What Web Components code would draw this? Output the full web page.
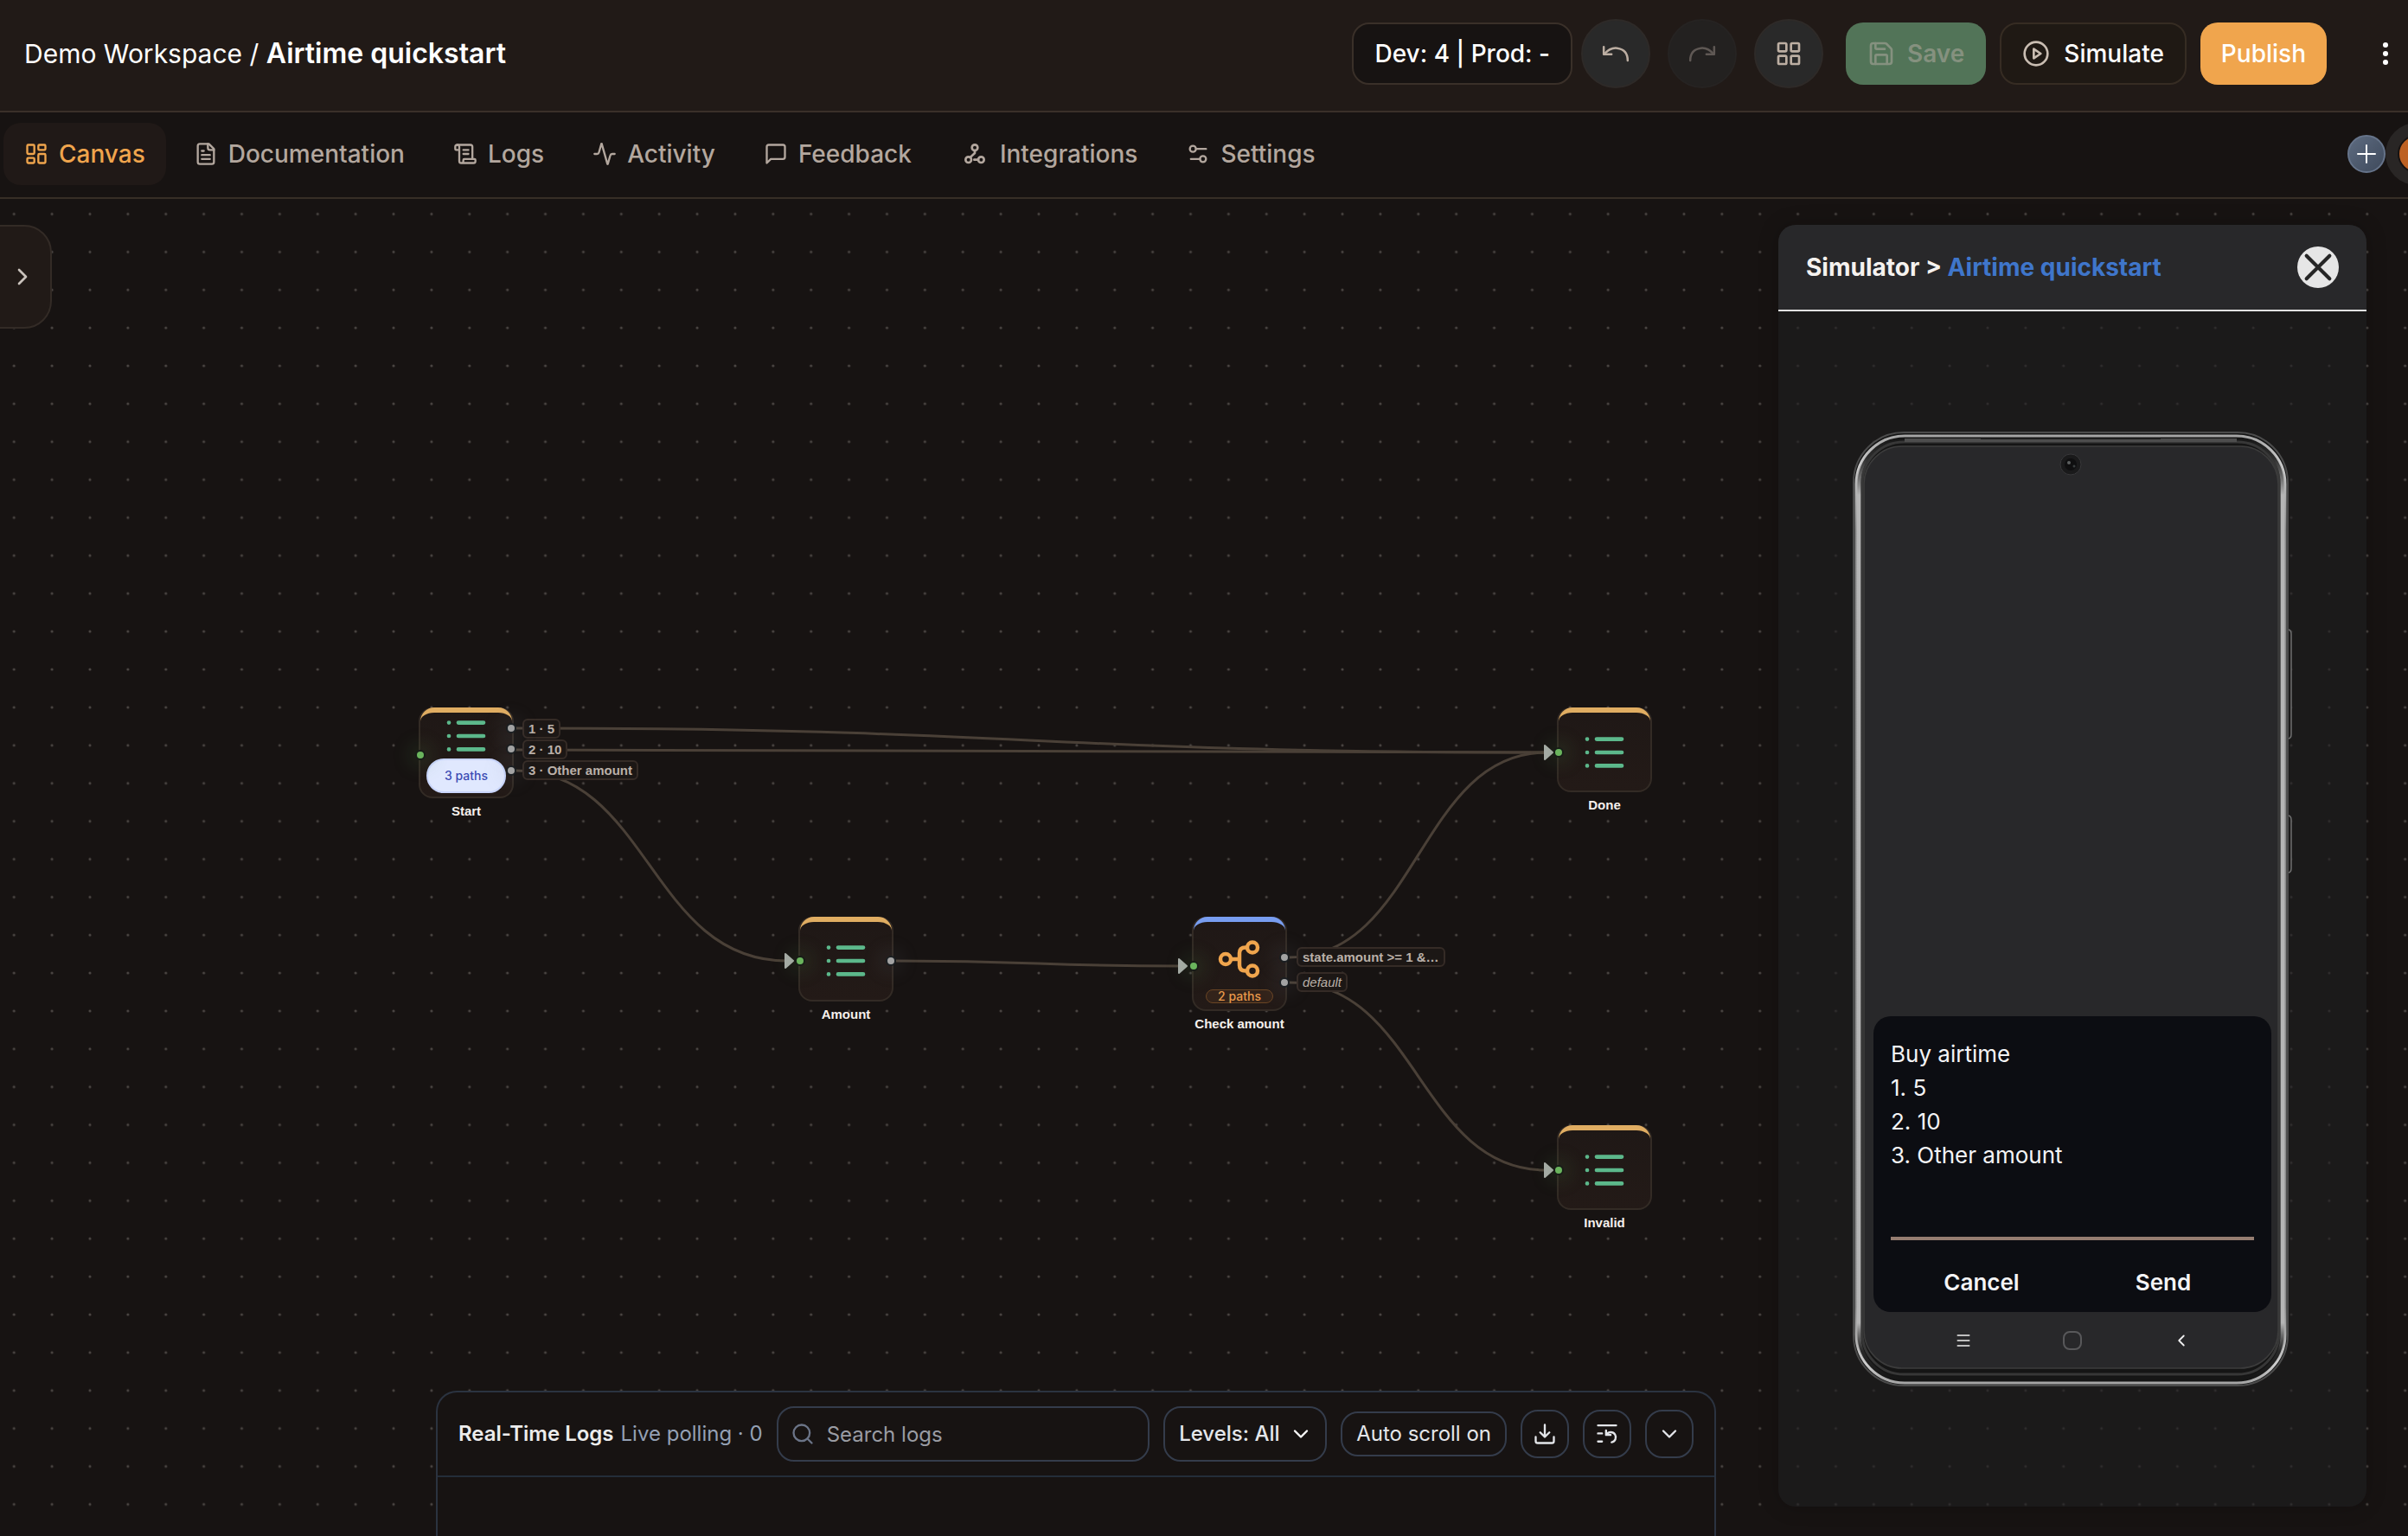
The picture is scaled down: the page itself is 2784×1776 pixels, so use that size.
<!DOCTYPE html>
<html lang="en">
<head>
<meta charset="utf-8">
<title>Airtime quickstart</title>
<style>
  :root {
    --bg: #171312;
    --surface: #211a17;
    --line: #3a3029;
    --muted: #b3a79e;
    --accent: #f0a54d;
    --slate: #343c4b;
  }
  html, body { margin: 0; height: 100%; background: var(--bg); }
  body { font-family: Inter, "Liberation Sans", sans-serif; color: #fff; overflow: hidden; }
</style>
</head>
<body>
<workflow-app></workflow-app>

<script>
const define = (name, css, html, setup) => {
  const template = document.createElement('template');
  template.innerHTML = `<style>*{box-sizing:border-box}${css}</style>${html}`;
  customElements.define(name, class extends HTMLElement {
    connectedCallback() {
      if (this.shadowRoot) return;
      this.attachShadow({ mode: 'open' }).append(template.content.cloneNode(true));
      if (setup) setup(this, this.shadowRoot);
    }
  });
};

const ICONS = {
  dashboard: '<rect x="3" y="3" width="7" height="9" rx="1"/><rect x="14" y="3" width="7" height="5" rx="1"/><rect x="14" y="12" width="7" height="9" rx="1"/><rect x="3" y="16" width="7" height="5" rx="1"/>',
  file: '<path d="M15 2H6a2 2 0 0 0-2 2v16a2 2 0 0 0 2 2h12a2 2 0 0 0 2-2V7Z"/><path d="M14 2v4a2 2 0 0 0 2 2h4M10 9H8M16 13H8M16 17H8"/>',
  scroll: '<path d="M15 12h-5M15 8h-5M19 17V5a2 2 0 0 0-2-2H4"/><path d="M8 21h12a2 2 0 0 0 2-2v-1a1 1 0 0 0-1-1H11a1 1 0 0 0-1 1v1a2 2 0 1 1-4 0V5a2 2 0 1 0-4 0v2a1 1 0 0 0 1 1h3"/>',
  activity: '<path d="M22 12h-2.5a2 2 0 0 0-1.9 1.5l-2.35 8.3a.25.25 0 0 1-.5 0L9.25 2.2a.25.25 0 0 0-.5 0L6.4 10.500A2 2 0 0 1 4.500 12H2"/>',
  message: '<path d="M21 15a2 2 0 0 1-2 2H7l-4 4V5a2 2 0 0 1 2-2h14a2 2 0 0 1 2 2z"/>',
  nodes: '<circle cx="12" cy="6.500" r="2.500"/><circle cx="6.500" cy="17" r="2.500"/><circle cx="17.500" cy="17" r="2.500"/><path d="M12 9v2.200l-3.700 3.500M11.500 17H15"/>',
  settings: '<path d="M20 7h-9M14 17H5"/><circle cx="17" cy="17" r="3"/><circle cx="7" cy="7" r="3"/>',
  undo: '<path d="M3.700 7.300v5.200h5.400"/><path d="M4 12.300C7 9 10 7.800 13 8.200c4.500.6 7.300 3.600 7.300 8.600"/>',
  redo: '<path d="M20.300 7.300v5.200h-5.400"/><path d="M20 12.300C17 9 14 7.800 11 8.200c-4.500.6-7.300 3.600-7.300 8.600"/>',
  grid: '<rect x="3" y="3" width="7" height="7" rx="1"/><rect x="14" y="3" width="7" height="7" rx="1"/><rect x="14" y="14" width="7" height="7" rx="1"/><rect x="3" y="14" width="7" height="7" rx="1"/>',
  save: '<path d="M15.200 3a2 2 0 0 1 1.400.6l3.800 3.800a2 2 0 0 1 .6 1.400V19a2 2 0 0 1-2 2H5a2 2 0 0 1-2-2V5a2 2 0 0 1 2-2z"/><path d="M17 21v-7a1 1 0 0 0-1-1H8a1 1 0 0 0-1 1v7M7 3v4a1 1 0 0 0 1 1h7"/>',
  play: '<circle cx="12" cy="12" r="10"/><path d="m10 8 6 4-6 4z"/>',
  kebab: '<g fill="currentColor" stroke="none"><circle cx="12" cy="3.400" r="2.600"/><circle cx="12" cy="12" r="2.600"/><circle cx="12" cy="20.600" r="2.600"/></g>',
  plus: '<path d="M12 2v20M2 12h20"/>',
  right: '<path d="m9 18 6-6-6-6"/>',
  left: '<path d="m15 18-6-6 6-6"/>',
  down: '<path d="m6 9 6 6 6-6"/>',
  search: '<circle cx="11" cy="11" r="8"/><path d="m21 21-4.300-4.300"/>',
  download: '<path d="M12 3v12M7.500 10.500 12 15l4.500-4.500M3 15v4a2 2 0 0 0 2 2h14a2 2 0 0 0 2-2v-4"/>',
  history: '<path d="M3 3.500h18M3 11.500h4M3 19.500h4"/><path d="M11 8.500v4.500h4.500"/><path d="M11.500 12.500a5 5 0 1 1 5 7.700"/>',
  close: '<path d="M4 4l16 16M20 4 4 20"/>',
  menu: '<path d="M3 4h18M3 12h18M3 20h18"/>'
};
define('ui-icon',
  `:host{display:block;flex:none;width:28px;height:28px}svg{display:block;width:100%;height:100%}`,
  `<svg viewBox="0 0 24 24" fill="none" stroke="currentColor" stroke-linecap="round" stroke-linejoin="round" aria-hidden="true"></svg>`,
  (el, root) => {
    const svg = root.querySelector('svg');
    svg.setAttribute('stroke-width', el.getAttribute('weight') || '2');
    svg.innerHTML = ICONS[el.getAttribute('name')];
  });

/* ---------- top bar ---------- */
define('top-bar', `
  :host{display:flex;align-items:center;flex:none;height:130px;padding:0 12px 4px 28px;background:var(--surface);border-bottom:2px solid var(--line)}
  h1{margin:0;font-size:30px;font-weight:400;line-height:40px;white-space:nowrap}
  h1 b{font-size:32px;font-weight:600}
  nav{display:flex;align-items:center;margin-left:auto}
  .box,button{display:flex;align-items:center;justify-content:center;height:72px;border-radius:20px;font:500 28px/36px Inter,sans-serif;color:#fff;border:2px solid transparent;white-space:nowrap}
  .box{padding:0 24px;border-color:var(--line);background:#171312;margin-right:10px}
  .round{width:80px;height:80px;border-radius:40px;background:#292929;color:#bcaea2;padding:0;border-color:#2e2a28;margin-right:20px}
  .round ui-icon{width:40px;height:40px}
  .round.last ui-icon{width:32px;height:32px}
  .dim{background:#232120;color:#5f5854;border-color:#262322}
  .round.last{margin-right:26px}
  .save{gap:14px;padding:0 23px;background:#527458;color:#85917f;margin-right:16px;font-weight:600}
  .sim{gap:16px;padding:0 24px;background:#1f1914;border-color:#362c23;margin-right:16px}
  .sim ui-icon,.save ui-icon{width:32px;height:32px}
  .sim ui-icon{color:#c9bdb2}
  .pub{padding:0 22px;background:var(--accent);margin-right:54px}
  .more{width:28px;padding:0;background:none;border:0}
`, `
  <h1>Demo Workspace / <b>Airtime quickstart</b></h1>
  <nav>
    <span class="box">Dev: 4 | Prod: -</span>
    <button class="round" aria-label="Undo"><ui-icon name="undo" weight="1.500"></ui-icon></button>
    <button class="round dim" aria-label="Redo"><ui-icon name="redo" weight="1.500"></ui-icon></button>
    <button class="round last" aria-label="Apps"><ui-icon name="grid"></ui-icon></button>
    <button class="save"><ui-icon name="save"></ui-icon>Save</button>
    <button class="sim"><ui-icon name="play" weight="2"></ui-icon>Simulate</button>
    <button class="pub">Publish</button>
    <button class="more" aria-label="More"><ui-icon name="kebab"></ui-icon></button>
  </nav>
`);

/* ---------- tabs ---------- */
define('tab-link', `
  :host{display:block}
  a{display:flex;align-items:center;gap:12px;height:72px;padding:0 24px;border-radius:20px;color:var(--muted);font-size:28px;font-weight:500;line-height:36px;text-decoration:none;white-space:nowrap}
  :host([active]) a{background:#201917;color:var(--accent)}
  :host([large]) ui-icon{width:34px;height:32px}
`, `<a href="#"><ui-icon></ui-icon><slot></slot></a>`, (el, root) => {
  const icon = document.createElement('ui-icon');
  icon.setAttribute('name', el.getAttribute('icon'));
  root.querySelector('ui-icon').replaceWith(icon);
});
define('tab-bar', `
  :host{display:flex;align-items:center;flex:none;gap:8px;height:100px;padding:0 0 2px 4px;border-bottom:2px solid #372e26;background:var(--bg);overflow:hidden}
  .people{display:flex;align-items:center;margin-left:auto;margin-right:-46px;flex:none}
  button{width:44px;height:44px;padding:0;border-radius:22px;border:2px solid #66748a;background:linear-gradient(135deg,#5d6b80,#3f4a5c);color:#fff;display:grid;place-items:center}
  button ui-icon{width:24px;height:24px}
  .pill{width:72px;height:72px;border-radius:36px;background:#292625;display:grid;place-items:center}
  .pill i{width:44px;height:44px;border-radius:22px;background:#bd6123;border:2px solid #171312}
`, `
  <tab-link icon="dashboard" active>Canvas</tab-link>
  <tab-link icon="file">Documentation</tab-link>
  <tab-link icon="scroll">Logs</tab-link>
  <tab-link icon="activity">Activity</tab-link>
  <tab-link icon="message">Feedback</tab-link>
  <tab-link icon="nodes" large>Integrations</tab-link>
  <tab-link icon="settings">Settings</tab-link>
  <div class="people"><button aria-label="Invite"><ui-icon name="plus"></ui-icon></button><span class="pill"><i></i></span></div>
`);

/* ---------- canvas nodes ---------- */
define('flow-node', `
  :host{position:absolute;width:110px}
  .card{position:relative;border:2px solid #332b25;border-radius:16px;background:linear-gradient(#1f1816,#231a17)}
  .card::before{content:"";position:absolute;left:0;right:0;top:-2px;height:14px;border-top:6px solid var(--cap,#e0ad62);border-radius:16px 16px 0 0}
  :host([kind=branch]){--cap:#789df0}
  svg{position:absolute;left:0;top:0;width:106px;height:100px;overflow:visible}
  i{position:absolute;width:12px;height:12px;border-radius:6px;border:2px solid #171c17;background:#6ab45d;box-shadow:0 0 22px 6px #4f8a4738}
  i.out{background:#a3a3a3;border-color:#1b1f22;box-shadow:0 0 24px 6px #8a94a024}
  i.in{left:-6px} i.out{right:-5px}
  p{margin:5px -40px 0;text-align:center;font:700 15px/20px "Liberation Sans",Arial,sans-serif;color:#f5f0ec}
  ::slotted(*){position:absolute}
`, `<div class="card"><svg aria-hidden="true"></svg><slot></slot></div><p></p>`, (el, root) => {
  const a = n => el.getAttribute(n);
  el.style.left = a('x') + 'px';
  el.style.top = a('y') + 'px';
  const card = root.querySelector('.card');
  card.style.height = a('h') + 'px';
  root.querySelector('p').textContent = a('label');
  const cy = +a('cy') - 2;
  root.querySelector('svg').innerHTML = a('kind') === 'branch'
    ? `<g transform="translate(53 ${cy})" fill="none" stroke="#f0a54d" stroke-width="4.500"><circle cx="-16" cy="0" r="6"/><circle cx="15" cy="-13.500" r="6"/><circle cx="15" cy="13.500" r="6"/><path d="M-10 0H0M9 -13.500H7Q0 -13.500 0 -7V7Q0 13.500 7 13.500H9"/></g>`
    : `<g transform="translate(53 ${cy})" stroke="#5cb88b" stroke-width="4.700" stroke-linecap="round">${[-15.4, 0, 15.4].map(y => `<path d="M-20 ${y}h.01M-9 ${y}H20"/>`).join('')}</g>`;
  const dot = (cls, y) => {
    const i = document.createElement('i');
    i.className = cls;
    i.style.top = (y - 8) + 'px';
    card.append(i);
  };
  dot('in', a('in'));
  (a('out') || '').split(' ').filter(Boolean).forEach(y => dot('out', y));
});
define('path-badge', `
  :host{display:block;left:14px;right:14px;bottom:7px;height:16px;border-radius:8px;border:1px solid #6a4524;background:#33231a;color:#e8994a;font:500 14px/14px Inter,sans-serif;text-align:center}
  :host([light]){left:7px;right:7px;bottom:4px;height:40px;border-radius:20px;border:2px solid #c9d5fb;background:#e0e8fe;color:#3c4cb4;line-height:36px}
`, `<slot></slot>`);
define('edge-label', `
  :host{position:absolute;height:23px;padding:0 5px;border:2px solid #352b26;border-radius:6px;background:#1c1715;color:#bab0a8;font:700 15px/19px "Liberation Sans",Arial,sans-serif;white-space:nowrap}
  :host([plain]){font-weight:400;font-style:italic}
`, `<slot></slot>`, el => { el.style.left = el.getAttribute('x') + 'px'; el.style.top = el.getAttribute('y') + 'px'; });

define('flow-canvas', `
  :host{display:block;position:relative;flex:1;min-height:0;overflow:hidden}
  .wires{position:absolute;inset:0;width:100%;height:100%}
  .drawer{position:absolute;left:-2px;top:30px;width:62px;height:120px;padding:0 6px 0 0;border:2px solid #332b26;border-radius:0 32px 32px 0;background:var(--surface);color:#c9c2bc;display:grid;place-items:center}
  .drawer ui-icon{width:32px;height:32px}
`, `
  <svg class="wires" aria-hidden="true">
    <defs><pattern id="dots" width="40" height="40" patternUnits="userSpaceOnUse" patternTransform="translate(-5.700 -4.500) scale(1.097)"><circle cx="20" cy="20" r="1.400" fill="#4b4643"/></pattern></defs>
    <rect width="100%" height="100%" fill="url(#dots)"/>
    <g fill="none" stroke="#4a4037" stroke-width="3">
      <path d="M596 612C1190 612 1190 640 1788 640"/>
      <path d="M596 637C1190 637 1190 640 1788 640"/>
      <path d="M596 661C751 661 751 881 910 881"/>
      <path d="M1036 881C1200 881 1200 887 1366 887"/>
      <path d="M1490 877C1640 877 1640 640 1788 640"/>
      <path d="M1490 906C1640 906 1640 1123 1788 1123"/>
    </g>
    <g fill="#a9ada9" stroke="#a9ada9" stroke-width="2" stroke-linejoin="round">
      <path d="M908 873v16l9-8zM1363 879v16l9-8zM1786 632v16l9-8zM1786 1115v16l9-8z"/>
    </g>
  </svg>
  <edge-label x="604" y="601">1 · 5</edge-label>
  <edge-label x="604" y="625">2 · 10</edge-label>
  <edge-label x="604" y="649">3 · Other amount</edge-label>
  <edge-label x="1499" y="865">state.amount &gt;= 1 &amp;…</edge-label>
  <edge-label x="1499" y="894" plain>default</edge-label>
  <flow-node x="484" y="588" h="105" cy="33" in="55" out="24 48 73" label="Start"><path-badge light>3 paths</path-badge></flow-node>
  <flow-node x="923" y="830" h="98" cy="51" in="51" out="51" label="Amount"></flow-node>
  <flow-node x="1378" y="830" h="109" cy="49" in="57" out="47 76" label="Check amount" kind="branch"><path-badge>2 paths</path-badge></flow-node>
  <flow-node x="1800" y="588" h="98" cy="52" in="52" label="Done"></flow-node>
  <flow-node x="1800" y="1071" h="98" cy="52" in="52" label="Invalid"></flow-node>
  <button class="drawer" aria-label="Open panel"><ui-icon name="right"></ui-icon></button>
  <logs-panel></logs-panel>
  <simulator-panel></simulator-panel>
`);

/* ---------- logs ---------- */
define('logs-panel', `
  :host{position:absolute;left:504px;right:800px;bottom:0;height:168px;border:2px solid #2b3340;border-bottom:0;border-radius:24px 24px 0 0;background:#171312}
  header{display:flex;align-items:center;gap:16px;height:98px;padding:0 24px;border-bottom:2px solid #242d39;font-size:24px;line-height:32px;white-space:nowrap}
  h2{margin:0;font-size:24px;font-weight:600;color:#ececec}
  .title{display:flex;gap:8px;color:#94a0b4}
  label{position:relative;display:flex;align-items:center}
  .search{flex:1}
  .search ui-icon{position:absolute;left:16px;color:#6b7487}
  input,select,button{height:64px;border:2px solid var(--slate);border-radius:20px;background:none;font:400 24px/32px Inter,sans-serif;color:#e4e6ea;appearance:none;margin:0}
  input{width:100%;min-width:0;padding:0 16px 0 56px}
  input::placeholder{color:#9a9ca3;opacity:1}
  select{padding:0 52px 0 16px;font-weight:500}
  .level ui-icon{position:absolute;right:16px;width:28px;height:28px;pointer-events:none}
  button{height:52px;padding:0 16px}
  button.sq{width:56px;height:56px;padding:0;display:grid;place-items:center}
`, `
  <header>
    <div class="title"><h2>Real-Time Logs</h2><span>Live polling · 0</span></div>
    <label class="search"><ui-icon name="search"></ui-icon><input type="text" placeholder="Search logs" aria-label="Search logs"></label>
    <label class="level"><select aria-label="Levels"><option>Levels: All</option></select><ui-icon name="down"></ui-icon></label>
    <button>Auto scroll on</button>
    <button class="sq" aria-label="Download"><ui-icon name="download"></ui-icon></button>
    <button class="sq" aria-label="Clear"><ui-icon name="history"></ui-icon></button>
    <button class="sq" aria-label="Collapse"><ui-icon name="down"></ui-icon></button>
  </header>
`);

/* ---------- simulator ---------- */
define('simulator-panel', `
  :host{position:absolute;top:30px;right:48px;bottom:34px;width:680px;display:flex;flex-direction:column;border-radius:20px;overflow:hidden;background:#1f1f20a0;box-shadow:0 0 24px #0003}
  header{display:flex;align-items:center;justify-content:space-between;flex:none;height:100px;padding:0 32px;background:#28282a;border-bottom:2px solid #e2e2e2}
  h2{margin:0;font-size:28px;font-weight:700;line-height:36px;color:#f5f2ef}
  h2 a{color:#3f76cb;text-decoration:none}
  header button{width:48px;height:48px;padding:0;border:0;border-radius:24px;background:#e6e6e6;color:#262626;display:grid;place-items:center}
  header ui-icon{width:40px;height:40px}
  main{flex:1;display:grid;place-items:center}
`, `
  <header><h2>Simulator &gt; <a href="#">Airtime quickstart</a></h2><button aria-label="Close"><ui-icon name="close" weight="2.500"></ui-icon></button></header>
  <main><phone-frame></phone-frame></main>
`);
define('phone-frame', `
  :host{position:relative;display:flex;flex-direction:column;justify-content:flex-end;width:508px;height:1104px;padding:0 24px 21px}
  svg.body{position:absolute;inset:0;width:508px;height:1104px}
  form{position:relative;display:flex;flex-direction:column;height:342px;padding:24px 20px 8px;border-radius:20px;background:#0c0d12;color:#f4f4f6}
  p{margin:0;font-size:26px;line-height:39px;white-space:pre-line}
  input{flex:none;height:58px;margin:21px 0 0;padding:0;border:0;border-bottom:4px solid #967d71;background:none;color:inherit;font:400 26px/39px Inter,sans-serif;outline:0}
  .row{display:flex;margin-top:24px}
  button{padding:0;border:0;background:none;color:inherit;font:600 26px/50px Inter,sans-serif;flex:1}
  nav{position:relative;display:flex;justify-content:center;align-items:center;height:65px}
  nav button{flex:none;width:126px;display:grid;place-items:center;color:#f0f0f0}
  .m{width:20px;height:18px}.b{width:22px;height:22px}
  .home{width:22px;height:22px;border:2px solid #58585a;border-radius:8px}
`, `
  <svg class="body" viewBox="0 0 508 1104" aria-hidden="true">
    <defs>
      <linearGradient id="rail" x1="0" x2="0" y1="0" y2="1"><stop offset="0" stop-color="#bdbdbd" stop-opacity="0"/><stop offset=".02" stop-color="#8a8a8a" stop-opacity=".2"/><stop offset=".06" stop-color="#b5b5b5"/><stop offset=".94" stop-color="#b5b5b5"/><stop offset=".97" stop-color="#777" stop-opacity=".2"/><stop offset="1" stop-color="#777" stop-opacity="0"/></linearGradient>
      <linearGradient id="rim" x1="0" x2="0" y1="0" y2="1"><stop offset="0" stop-color="#a5a5a5"/><stop offset=".03" stop-color="#cfcfcf"/><stop offset=".1" stop-color="#8a8a8a"/><stop offset=".92" stop-color="#8a8a8a"/><stop offset=".98" stop-color="#cfcfcf"/><stop offset="1" stop-color="#a5a5a5"/></linearGradient>
    </defs>
    <path d="M503 229q4 0 4 5v116q0 5-4 5M503 444q4 0 4 5v56q0 5-4 5" fill="#1c1b1b" stroke="#6f6f6f" stroke-width="1.500"/>
    <rect x="1" y="1" width="502" height="1102" rx="58" fill="#151515" stroke="#4b4b4b" stroke-width="2"/>
    <rect x="4" y="5" width="496" height="1095" rx="56" fill="none" stroke="url(#rim)" stroke-width="3"/>
    <rect x="7" y="8" width="490" height="1088" rx="52" fill="none" stroke="url(#rail)" stroke-width="5"/>
    <rect x="11" y="12" width="482" height="1078" rx="48" fill="none" stroke="#4e4e4e" stroke-opacity=".6" stroke-width="3"/>
    <path d="M60 10H444" stroke="#4d4d4d" stroke-width="4"/>
    <path d="M148 8H356" stroke="#1d1d1d" stroke-width="2"/>
    <rect x="13" y="17" width="479" height="1066" rx="44" fill="#28282a" stroke="#3c3c3c" stroke-width="1.500"/>
    <circle cx="252" cy="38" r="12" fill="#1a1a1b" stroke="#38383a"/><circle cx="252" cy="38" r="7" fill="#0f0f10"/><circle cx="250" cy="36" r="2" fill="#5c5f60"/><circle cx="256" cy="40" r="1.500" fill="#3a3f40"/>
  </svg>
  <form>
    <p>Buy airtime
1. 5
2. 10
3. Other amount</p>
    <input type="text" aria-label="Reply">
    <div class="row"><button type="button">Cancel</button><button type="button">Send</button></div>
  </form>
  <nav>
    <button aria-label="Recent"><ui-icon class="m" name="menu"></ui-icon></button>
    <button aria-label="Home"><span class="home"></span></button>
    <button aria-label="Back"><ui-icon class="b" name="left"></ui-icon></button>
  </nav>
`);

define('workflow-app', `:host{display:flex;flex-direction:column;height:100vh}`,
  `<top-bar></top-bar><tab-bar></tab-bar><flow-canvas></flow-canvas>`);
</script>
</body>
</html>
